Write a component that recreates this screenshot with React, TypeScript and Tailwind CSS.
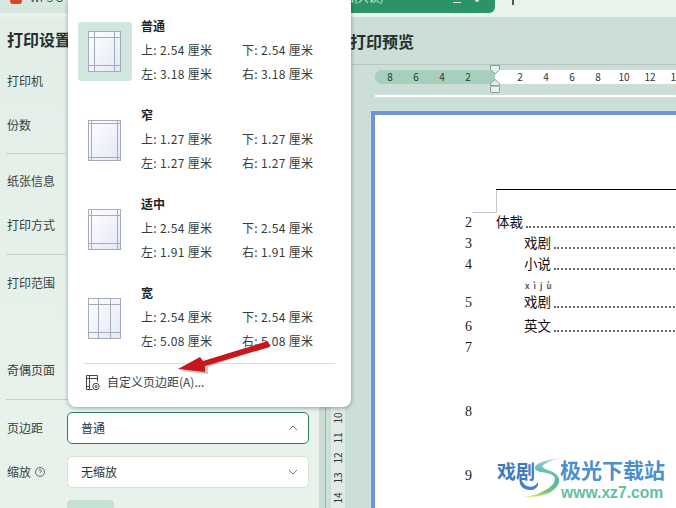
import React from "react";

const F = { fontFamily: '"Noto Sans CJK SC", "Noto Sans", sans-serif' };

function PageIcon({ t, b, l, r }: { t: number; b: number; l: number; r: number }) {
  const x0 = 0.5, y0 = 0.5, w = 32, h = 40;
  const c = "#a4abbb";
  return (
    <svg width="34" height="42" viewBox="0 0 34 42">
      <defs>
        <linearGradient id="pg" x1="0" y1="0" x2="1" y2="1">
          <stop offset="0" stopColor="#ffffff" />
          <stop offset="1" stopColor="#e3e8f6" />
        </linearGradient>
      </defs>
      <rect x={x0} y={y0} width={w} height={h} fill="url(#pg)" stroke={c} />
      <path
        d={`M${x0} ${y0 + t}H${x0 + w}M${x0} ${y0 + h - b}H${x0 + w}M${x0 + l} ${y0}V${y0 + h}M${x0 + w - r} ${y0}V${y0 + h}`}
        stroke={c}
        fill="none"
      />
    </svg>
  );
}

type PresetProps = { name: string; top: string; bottom: string; left: string; right: string; icon: { t: number; b: number; l: number; r: number }; active?: boolean };

function Preset({ name, top, bottom, left, right, icon, active }: PresetProps) {
  return (
    <div className="flex h-[89px] pl-[10px]">
      <div className={`w-[54px] h-[59px] mt-[4px] rounded-[3px] flex items-center justify-center shrink-0 ${active ? "bg-[#d1e6de]" : ""}`}>
        <PageIcon {...icon} />
      </div>
      <div className="ml-[9px] text-[12px] leading-[24px] text-[#333c38] tracking-[0.33px]">
        <div className="font-bold text-[#222] h-[24px] -mt-[4px] tracking-normal">{name}</div>
        <div className="grid grid-cols-[101px_101px]">
          <span>上: {top} 厘米</span>
          <span>下: {bottom} 厘米</span>
          <span>左: {left} 厘米</span>
          <span>右: {right} 厘米</span>
        </div>
      </div>
    </div>
  );
}

function Label({ children, className = "" }: { children: React.ReactNode; className?: string }) {
  return <div className={`text-[12px] leading-[18px] text-[#39423e] ${className}`}>{children}</div>;
}

function Sidebar() {
  return (
    <aside className="w-[326px] h-full flex shrink-0 bg-gradient-to-b from-[#e2eee7] to-[#e9f3ec]">
      <div className="w-[319px] pl-[7px] pt-[13px]">
        <div className="text-[16px] leading-[24px] font-bold text-[#26302c] pt-[14px] h-[66px]">打印设置</div>
        <div className="flex flex-col">
          <Label className="mt-[-7px]">打印机</Label>
          <Label className="mt-[26px]">份数</Label>
          <div className="h-px w-[60px] bg-[#c5cfc9] -ml-[1px] mt-[19px]" />
          <Label className="mt-[18px]">纸张信息</Label>
          <Label className="mt-[26px]">打印方式</Label>
          <div className="h-px w-[60px] bg-[#c5cfc9] -ml-[1px] mt-[20px]" />
          <Label className="mt-[19px]">打印范围</Label>
          <Label className="mt-[69px]">奇偶页面</Label>
          <div className="h-px w-[300px] bg-[#c5cfc9] -ml-[1px] mt-[20px]" />
          <div className="flex items-center mt-[12px] h-[32px]">
            <span className="w-[60px] text-[12px] text-[#39423e]">页边距</span>
            <div className="w-[242px] h-[32px] rounded-[5px] border border-[#2f7a5f] bg-white flex items-center justify-between pl-[13px] pr-[9px] text-[12px] text-[#333]">
              普通
              <svg width="12" height="12" viewBox="0 0 12 12" fill="none" stroke="#777"><path d="M2 8l4-4 4 4" /></svg>
            </div>
          </div>
          <div className="flex items-center mt-[12px] h-[32px]">
            <span className="w-[60px] text-[12px] text-[#39423e] flex items-center gap-[3px]">
              缩放
              <svg width="12" height="12" viewBox="0 0 12 12" fill="none" stroke="#666"><circle cx="6" cy="6" r="4.5" /><path d="M4.7 4.8a1.3 1.3 0 112 1.1c-.5.3-.7.5-.7 1M6 8.4v.6" /></svg>
            </span>
            <div className="w-[242px] h-[32px] rounded-[5px] border border-[#d7dfda] bg-white flex items-center justify-between pl-[13px] pr-[9px] text-[12px] text-[#333]">
              无缩放
              <svg width="12" height="12" viewBox="0 0 12 12" fill="none" stroke="#777"><path d="M2 4l4 4 4-4" /></svg>
            </div>
          </div>
          <div className="ml-[60px] mt-[12px] w-[47px] h-[24px] rounded-[4px] bg-[#c6e0d5]" />
        </div>
      </div>
      <div className="w-[6px] mt-[17px] bg-[#c9ddd4]" />
      <div className="w-px mt-[17px] bg-[#a3b3ac]" />
    </aside>
  );
}

function Menu() {
  const presets: PresetProps[] = [
    { name: "普通", top: "2.54", bottom: "2.54", left: "3.18", right: "3.18", active: true, icon: { t: 6, b: 6, l: 6, r: 6 } },
    { name: "窄", top: "1.27", bottom: "1.27", left: "1.27", right: "1.27", icon: { t: 3, b: 3, l: 3, r: 3 } },
    { name: "适中", top: "2.54", bottom: "2.54", left: "1.91", right: "1.91", icon: { t: 6, b: 6, l: 3, r: 3 } },
    { name: "宽", top: "2.54", bottom: "2.54", left: "5.08", right: "5.08", icon: { t: 6, b: 6, l: 10, r: 10 } },
  ];
  return (
    <div className="absolute left-[68px] top-0 w-[283px] h-[407px] bg-white rounded-b-[8px] shadow-[0_1px_4px_rgba(0,0,0,0.35)] pt-[18px]">
      {presets.map((p) => <Preset key={p.name} {...p} />)}
      <div className="mx-[16px] h-px bg-[#dcdfdd] -mt-[11px]" />
      <div className="flex items-center pl-[17px] h-[36px] text-[12px] text-[#39423e] gap-[7px]">
        <svg width="15" height="17" viewBox="0 0 15 17" fill="none" stroke="#3f4743">
          <path d="M1.5 1.5h11v6M1.5 1.5v14h6M4.5 1.5v14M1.5 4.5h11M1.5 12.5h3" />
          <circle cx="11" cy="12.5" r="3.2" />
          <circle cx="11" cy="12.5" r="1" />
        </svg>
        自定义页边距(A)...
      </div>
    </div>
  );
}

function Arrow() {
  return (
    <svg className="absolute left-[170px] top-[335px]" width="110" height="45" viewBox="0 0 110 45">
      <path d="M100 10 L38 32 L38 39 L10 36 L36 29 L98 9 Z" fill="#7a4a4a" fillOpacity="0.35" />
      <path d="M100 12 L35 31 L35 37 L8 34 L30 22 L33 26 L98 6 Z" fill="#c8171c" />
    </svg>
  );
}

function TocRow({ num, text, indent, className = "" }: { num: string; text?: string; indent?: boolean; className?: string }) {
  return (
    <div className={`flex h-[18px] leading-[18px] ${className}`}>
      <div className="w-[31px] shrink-0 text-[14px] text-[#222]" style={{ fontFamily: '"Liberation Serif", serif' }}>{num}</div>
      {text && (
        <div className={`flex-1 flex items-end -translate-y-[2px] text-[13.5px] text-[#111] ${indent ? "pl-[28px]" : ""}`}>
          <span className="shrink-0">{text}</span>
          <span className="flex-1 ml-[3px] mb-[2px] border-b-2 border-dotted border-[#6e6a62]" />
        </div>
      )}
    </div>
  );
}

function Page() {
  return (
    <div className="w-[400px] h-[500px] shrink-0 ml-[26px] bg-white border-4 border-[#6f95d6] pt-[74px] shadow-[0_0_0_1px_#d3e2e4]">
      <div className="ml-[121px] h-px bg-black" />
      <div className="ml-[98px] flex h-[23px] mb-px">
        <div className="w-[23px] self-end h-px bg-[#c4c4c4]" />
        <div className="w-px bg-[#c4c4c4]" />
      </div>
      <div className="ml-[90px]">
        <TocRow num="2" text="体裁" />
        <TocRow className="mt-[3px]" num="3" text="戏剧" indent />
        <TocRow className="mt-[3px]" num="4" text="小说" indent />
        <div className="ml-[60px] mt-[7px] mb-[3px] h-[10px] text-[8px] leading-[10px] tracking-[4px] font-bold text-[#555]">xìjù</div>
        <TocRow num="5" text="戏剧" indent />
        <TocRow className="mt-[6px]" num="6" text="英文" indent />
        <TocRow className="mt-[3px]" num="7" />
        <TocRow className="mt-[46px]" num="8" />
        <TocRow className="mt-[46px]" num="9" />
      </div>
    </div>
  );
}

function Preview() {
  const left = ["8", "6", "4", "2"];
  const nums = ["2", "4", "6", "8", "10", "12", "14"];
  const vert = ["10", "11", "12", "13", "14"];
  return (
    <main className="flex-1 min-w-0 mt-[17px] bg-[#cbded7] flex flex-col overflow-hidden">
      <div className="h-[47px] flex items-center pt-[1px] pl-[24px] shrink-0">
        <span className="text-[16px] font-bold text-[#26302c]">打印预览</span>
      </div>
      <div className="h-px bg-[#b8c6c0] shrink-0" />
      <div className="flex mt-[5px] ml-[49px] h-[14px] text-[10px] leading-[14px] text-[#333] relative shrink-0">
        <div className="w-[120px] shrink-0 bg-[#a7d0bc] rounded-l-[7px] flex pl-[2px]">
          {left.map((n) => <span key={n} className="w-[26px] text-center">{n}</span>)}
        </div>
        <div className="flex-1 min-w-0 bg-white flex pl-[12px]">
          {nums.map((n) => <span key={n} className="w-[26px] shrink-0 text-center">{n}</span>)}
        </div>
        <svg className="absolute left-[114px] -top-[5px]" width="12" height="29" viewBox="0 0 12 29" stroke="#8a9a93">
          <path d="M1.5 .5h9v4l-4.5 4.5-4.5-4.5z" fill="#e6f2ec" />
          <path d="M6 14.5l4.5 4v2h-9v-2z" fill="#e6f2ec" />
          <rect x="1.5" y="21" width="9" height="6.5" rx="1.5" fill="#e6f2ec" />
        </svg>
      </div>
      <div className="ml-[49px] mt-[11px] h-[2px] bg-white shrink-0" />
      <div className="flex mt-[14px] flex-1 min-h-0">
        <div className="ml-[5px] w-[14px] shrink-0 bg-[#deebe7] pt-[297px] flex flex-col items-center">
          {vert.map((n) => (
            <div key={n} className="h-[21px] flex items-center justify-center -rotate-90 text-[10px] leading-none text-[#333]">{n}</div>
          ))}
        </div>
        <Page />
      </div>
    </main>
  );
}

function Watermark() {
  return (
    <div className="absolute left-[497px] top-[455px] w-[175px] h-[50px]">
      <svg className="absolute left-[18px] top-0" width="48" height="46" viewBox="0 0 48 46">
        <defs>
          <linearGradient id="sw" x1="0.6" y1="0" x2="0.3" y2="1">
            <stop offset="0" stopColor="#a9d4ee" />
            <stop offset="0.45" stopColor="#4fb7a0" />
            <stop offset="0.8" stopColor="#7cc66d" />
            <stop offset="1" stopColor="#e3e27e" />
          </linearGradient>
        </defs>
        <path d="M47 3C34 4 22 7 20 12C19 17 29 17 35 19C42 21 41 27 36 31C30 37 18 41 8 42C22 43 38 39 43 30C47 22 40 17 33 15C27 13 26 11 30 9C34 6 40 4 47 3Z" fill="url(#sw)" />
        <path d="M5 22c-2 8 3 14 12 13c4-1 7-4 6-8c-2 4-7 6-11 4c-3-1-5-5-7-9z" fill="#3f84c6" />
      </svg>
      <span className="absolute left-0 top-[3px] text-[19px] leading-[26px] font-bold text-[#3f78c0] whitespace-nowrap">戏剧</span>
      <span className="absolute left-[63px] top-[0px] text-[21px] leading-[28px] font-bold text-[#4a8fd0] whitespace-nowrap">极光下载站</span>
      <span className="absolute left-[64px] top-[29px] text-[15.7px] leading-[18px] font-bold text-[#63bf9c] whitespace-nowrap" style={{ fontFamily: '"Liberation Sans", sans-serif' }}>www.xz7.com</span>
    </div>
  );
}

function TopBar() {
  return (
    <div className="absolute inset-x-0 top-0 h-[17px] bg-[#e8f3ec] flex items-start">
      <div className="w-[200px] h-[13px] bg-[#d9e8df] overflow-hidden flex items-start pl-[10px] gap-[8px] text-[11px] leading-[13px] text-[#445]">
        <span className="w-[12px] h-[4px] bg-[#d9442e] rounded-b-[3px] shrink-0" />
        <span className="whitespace-nowrap -translate-y-[9px]">WPS O</span>
      </div>
      <div className="w-[295px] h-[13px] bg-[#2b9365] rounded-br-[6px] overflow-hidden flex items-start text-[11px] leading-[13px] text-[#d8efe4] pl-[132px]">
        <span className="whitespace-nowrap -translate-y-[9px]">文档(只读)</span>
        <span className="ml-[70px] w-[8px] h-[3px] border-b border-[#d8efe4] shrink-0" />
        <span className="ml-[14px] w-[4px] h-[2px] bg-[#d8efe4] rounded-b-[2px] shrink-0" />
      </div>
      <div className="ml-[17px] w-[2px] h-[5px] bg-[#555]" />
    </div>
  );
}

export default function App() {
  return (
    <div className="w-[676px] h-[508px] overflow-hidden relative bg-[#e9f3ec]" style={F}>
      <div className="w-full h-full flex">
        <Sidebar />
        <Preview />
      </div>
      <TopBar />
      <Menu />
      <Arrow />
      <Watermark />
    </div>
  );
}
